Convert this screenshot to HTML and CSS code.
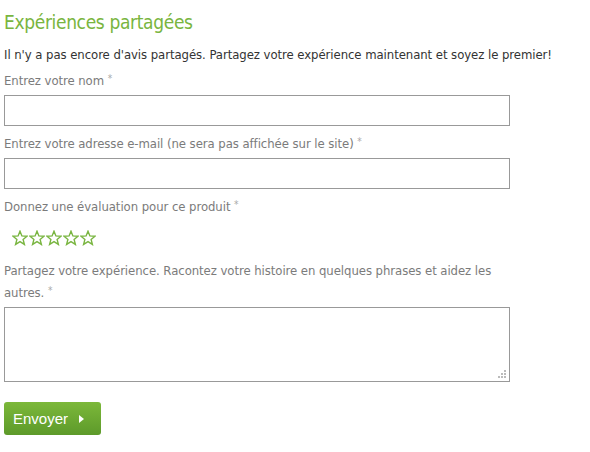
FILE: index.html
```html
<!DOCTYPE html>
<html lang="fr">
<head>
<meta charset="utf-8">
<title>Expériences partagées</title>
<link rel="stylesheet" href="styles.css">
</head>
<body>
<section class="reviews">
  <h2 class="title">Expériences partagées</h2>
  <p class="intro">Il n'y a pas encore d'avis partagés. Partagez votre expérience maintenant et soyez le premier!</p>
  <form class="form">
    <div class="field">
      <label class="label" for="name">Entrez votre nom <span class="req">*</span></label>
      <input class="input" id="name" type="text">
    </div>
    <div class="field">
      <label class="label" for="email">Entrez votre adresse e-mail (ne sera pas affichée sur le site) <span class="req">*</span></label>
      <input class="input" id="email" type="email">
    </div>
    <div class="field">
      <span class="label">Donnez une évaluation pour ce produit <span class="req">*</span></span>
      <div class="stars">
        <svg class="star" viewBox="0 0 16 16"><path d="M8 1.2 L9.9 5.9 L15 6.2 L11.1 9.4 L12.4 14.4 L8 11.6 L3.6 14.4 L4.9 9.4 L1 6.2 L6.1 5.9 Z"/></svg>
        <svg class="star" viewBox="0 0 16 16"><path d="M8 1.2 L9.9 5.9 L15 6.2 L11.1 9.4 L12.4 14.4 L8 11.6 L3.6 14.4 L4.9 9.4 L1 6.2 L6.1 5.9 Z"/></svg>
        <svg class="star" viewBox="0 0 16 16"><path d="M8 1.2 L9.9 5.9 L15 6.2 L11.1 9.4 L12.4 14.4 L8 11.6 L3.6 14.4 L4.9 9.4 L1 6.2 L6.1 5.9 Z"/></svg>
        <svg class="star" viewBox="0 0 16 16"><path d="M8 1.2 L9.9 5.9 L15 6.2 L11.1 9.4 L12.4 14.4 L8 11.6 L3.6 14.4 L4.9 9.4 L1 6.2 L6.1 5.9 Z"/></svg>
        <svg class="star" viewBox="0 0 16 16"><path d="M8 1.2 L9.9 5.9 L15 6.2 L11.1 9.4 L12.4 14.4 L8 11.6 L3.6 14.4 L4.9 9.4 L1 6.2 L6.1 5.9 Z"/></svg>
      </div>
    </div>
    <div class="field">
      <label class="label" for="story">Partagez votre expérience. Racontez votre histoire en quelques phrases et aidez les autres. <span class="req">*</span></label>
      <div class="textarea-wrap">
        <textarea class="textarea" id="story"></textarea>
        <svg class="grip" viewBox="0 0 8 8" aria-hidden="true">
          <rect x="6" y="0" width="2" height="2"/>
          <rect x="3" y="3" width="2" height="2"/>
          <rect x="6" y="3" width="2" height="2"/>
          <rect x="0" y="6" width="2" height="2"/>
          <rect x="3" y="6" width="2" height="2"/>
          <rect x="6" y="6" width="2" height="2"/>
        </svg>
      </div>
    </div>
    <button class="btn" type="button">Envoyer <span class="arrow"></span></button>
  </form>
</section>
</body>
</html>
```
FILE: styles.css
```css
html, body {
  margin: 0;
  padding: 0;
  background: #fff;
}
body {
  padding: 0 4px;
  font-family: "DejaVu Sans Condensed", "DejaVu Sans", sans-serif;
  font-size: 13px;
  letter-spacing: -0.06px;
  color: #333;
}
.reviews {
  width: 506px;
}
.title {
  margin: 0;
  padding-top: 10px;
  font-size: 19px;
  line-height: 24px;
  letter-spacing: -0.35px;
  font-weight: normal;
  color: #79b540;
}
.intro {
  margin: 12px 0 0;
  line-height: 17px;
  color: #333;
  white-space: nowrap;
}
.form {
  display: flex;
  flex-direction: column;
}
.field {
  display: flex;
  flex-direction: column;
}
.label {
  display: block;
  line-height: 22px;
  color: #7b7b7b;
  margin-top: 7px;
  margin-bottom: 3px;
  width: 506px;
}
.req {
  font-size: 10px;
  vertical-align: 3px;
  line-height: 0;
  color: #aaa;
}
.input {
  box-sizing: border-box;
  width: 506px;
  height: 31px;
  margin: 0;
  border: 1px solid #999;
  border-radius: 0;
  background: #fff;
}
.textarea-wrap {
  position: relative;
  width: 506px;
  height: 75px;
}
.textarea {
  display: block;
  box-sizing: border-box;
  width: 506px;
  height: 75px;
  margin: 0;
  border: 1px solid #999;
  background: #fff;
  resize: none;
}
.grip {
  position: absolute;
  right: 4px;
  bottom: 4px;
  width: 8px;
  height: 8px;
  fill: #bbb;
}
.stars {
  display: flex;
  gap: 1px;
  padding: 9px 0 0 8px;
  height: 23px;
}
.star {
  width: 16px;
  height: 16px;
  fill: none;
  stroke: #79b540;
  stroke-width: 1.4;
  stroke-linejoin: miter;
}
.btn {
  align-self: flex-start;
  margin-top: 20px;
  height: 33px;
  width: 97px;
  padding: 0 0 0 9px;
  display: flex;
  align-items: center;
  gap: 11px;
  border: 0;
  border-radius: 3px;
  background: linear-gradient(#7cb83a, #5d9a2a);
  color: #fff;
  font-family: "Liberation Sans", Arial, sans-serif;
  font-size: 15px;
  letter-spacing: 0;
}
.arrow {
  width: 0;
  height: 0;
  border-top: 4px solid transparent;
  border-bottom: 4px solid transparent;
  border-left: 5px solid #fff;
}
```
